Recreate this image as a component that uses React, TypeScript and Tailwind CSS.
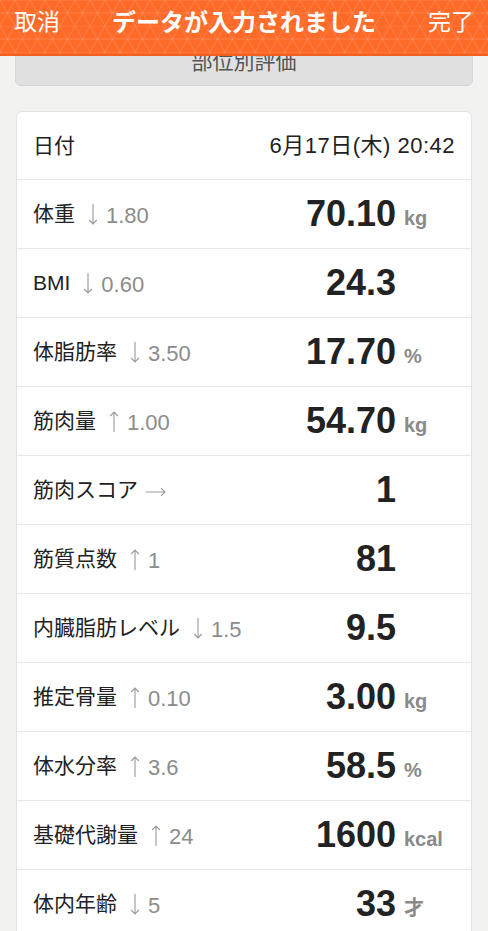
const rows = [
  { label: '体重', arrow: 'down', delta: '1.80', value: '70.10', unit: 'kg' },
  { label: 'BMI', arrow: 'down', delta: '0.60', value: '24.3', unit: '' },
  { label: '体脂肪率', arrow: 'down', delta: '3.50', value: '17.70', unit: '%' },
  { label: '筋肉量', arrow: 'up', delta: '1.00', value: '54.70', unit: 'kg' },
  { label: '筋肉スコア', arrow: 'right', delta: '', value: '1', unit: '' },
  { label: '筋質点数', arrow: 'up', delta: '1', value: '81', unit: '' },
  { label: '内臓脂肪レベル', arrow: 'down', delta: '1.5', value: '9.5', unit: '' },
  { label: '推定骨量', arrow: 'up', delta: '0.10', value: '3.00', unit: 'kg' },
  { label: '体水分率', arrow: 'up', delta: '3.6', value: '58.5', unit: '%' },
  { label: '基礎代謝量', arrow: 'up', delta: '24', value: '1600', unit: 'kcal' },
  { label: '体内年齢', arrow: 'down', delta: '5', value: '33', unit: '才' },
];

const HeaderPattern = () => (
  <svg className="absolute inset-0 w-full h-full" aria-hidden>
    <defs>
      <pattern id="tri" width="15" height="26" patternUnits="userSpaceOnUse">
        <path d="M0 0L15 26M15 0L0 26M0 0H15M0 13H15" stroke="#ffffff" strokeOpacity="0.13" strokeWidth="1" fill="none" />
      </pattern>
    </defs>
    <rect width="100%" height="100%" fill="url(#tri)" />
  </svg>
);

const Arrow = ({ dir }: { dir: string }) => {
  if (dir === 'right') {
    return (
      <svg width="21" height="10" viewBox="0 0 21 10" className="mt-[3px]" aria-hidden>
        <path d="M0.5 5H20M16 1.2L20 5L16 8.8" stroke="#9a9a9a" strokeWidth="1.1" fill="none" />
      </svg>
    );
  }
  const d = dir === 'up' ? 'M5 1V21M1.2 5L5 1L8.8 5' : 'M5 0V20M1.2 16L5 20L8.8 16';
  return (
    <svg width="10" height="21" viewBox="0 0 10 21" className="mt-[1px]" aria-hidden>
      <path d={d} stroke="#9a9a9a" strokeWidth="1.1" fill="none" />
    </svg>
  );
};

export default function App() {
  return (
    <div className="w-[488px] h-[931px] overflow-hidden bg-[#f2f2f0] font-['Liberation_Sans','Noto_Sans_CJK_JP',sans-serif] text-[#222]">
      <header className="relative z-10 h-[56px] bg-[#fe6b29] border-b-[2px] border-[#f2601e]">
        <HeaderPattern />
        <div className="relative flex items-center justify-between h-[45px] px-[14px] text-white">
          <span className="text-[23px]">取消</span>
          <span className="text-[24px] font-bold">データが入力されました</span>
          <span className="text-[23px]">完了</span>
        </div>
      </header>

      <div className="px-[15px] -mt-[18px]">
        <div className="h-[48px] flex items-center justify-center rounded-md bg-[#e1e1e1] border border-[#d6d6d6] text-[21px] text-[#555]">
          部位別評価
        </div>
      </div>

      <div className="mx-4 mt-[25px] bg-white border border-[#e4e4e4] rounded-md">
        <div className="h-[67px] flex items-center justify-between px-4">
          <span className="text-[21px]">日付</span>
          <span className="text-[22px] tracking-[0.5px]">6月17日(木) 20:42</span>
        </div>
        {rows.map((r) => (
          <div key={r.label} className="h-[69px] flex items-center border-t border-[#e8e8e8] px-4">
            <div className="flex-1 flex items-center">
              <span className="text-[21px]">{r.label}</span>
              <span className={r.arrow === 'right' ? 'ml-[7px]' : 'ml-[13px]'}>
                <Arrow dir={r.arrow} />
              </span>
              {r.delta && <span className="ml-[8px] mt-[3px] text-[22px] text-[#8c8c8c]">{r.delta}</span>}
            </div>
            <span className="text-[36px] font-bold leading-none text-right">{r.value}</span>
            <span className="w-[59px] pl-[8px] pt-[8px] text-[20px] font-bold text-[#8a8a8a]">{r.unit}</span>
          </div>
        ))}
      </div>
    </div>
  );
}
